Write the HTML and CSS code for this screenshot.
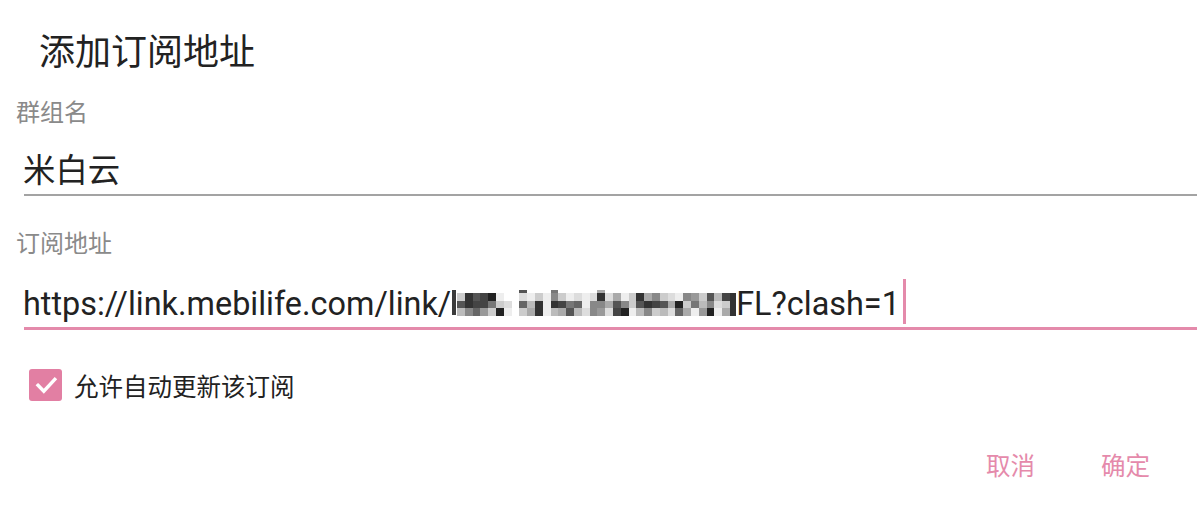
FILE: index.html
```html
<!DOCTYPE html>
<html lang="zh-CN">
<head>
<meta charset="utf-8">
<title>添加订阅地址</title>
<link rel="stylesheet" href="styles.css">
</head>
<body>
<div class="dialog">
  <h1 class="title">添加订阅地址</h1>

  <div class="field">
    <div class="label">群组名</div>
    <div class="value">米白云</div>
    <div class="line"></div>
  </div>

  <div class="field field-url">
    <div class="label">订阅地址</div>
    <div class="value url">https://link.mebilife.com/link/<svg class="mz" width="285" height="28" viewBox="0 0 285 28" shape-rendering="crispEdges"><rect class="stroke" x="1" y="1" fill="#3a3a3a"/><g transform="translate(6,4) scale(7.8,7.7)">
<rect x="0" y="0" fill="#ccc"/><rect x="0" y="1" fill="#555"/><rect x="0" y="2" fill="#bbb"/>
<rect x="1" y="0" fill="#333"/><rect x="1" y="1" fill="#333"/><rect x="1" y="2" fill="#888"/>
<rect x="2" y="0" fill="#555"/><rect x="2" y="1" fill="#444"/><rect x="2" y="2" fill="#666"/>
<rect x="3" y="0" fill="#444"/><rect x="3" y="1" fill="#444"/><rect x="3" y="2" fill="#999"/>
<rect x="4" y="0" fill="#222"/><rect x="4" y="1" fill="#777"/><rect x="4" y="2" fill="#ccc"/>
<rect x="5" y="0" fill="#eee"/><rect x="5" y="1" fill="#ccc"/><rect x="5" y="2" fill="#222"/>
<rect x="6" y="1" fill="#ddd"/><rect x="6" y="2" fill="#eee"/>
<rect class="half" x="8" y="-0.45" fill="#555"/><rect x="8" y="0" fill="#ddd"/><rect x="8" y="1" fill="#666"/><rect x="8" y="2" fill="#ccc"/>
<rect x="9" y="0" fill="#eee"/><rect x="9" y="1" fill="#bbb"/><rect x="9" y="2" fill="#aaa"/>
<rect x="10" y="0" fill="#ccc"/><rect x="10" y="1" fill="#333"/><rect x="10" y="2" fill="#333"/>
<rect x="11" y="0" fill="#eee"/><rect x="11" y="1" fill="#eee"/><rect x="11" y="2" fill="#eee"/>
<rect class="half" x="12" y="-0.45" fill="#777"/><rect x="12" y="0" fill="#888"/><rect x="12" y="1" fill="#333"/><rect x="12" y="2" fill="#bbb"/>
<rect x="13" y="0" fill="#ccc"/><rect x="13" y="1" fill="#444"/><rect x="13" y="2" fill="#aaa"/>
<rect x="14" y="0" fill="#eee"/><rect x="14" y="1" fill="#777"/><rect x="14" y="2" fill="#555"/>
<rect x="15" y="0" fill="#ddd"/><rect x="15" y="1" fill="#666"/><rect x="15" y="2" fill="#bbb"/>
<rect x="16" y="0" fill="#eee"/><rect x="16" y="1" fill="#eee"/><rect x="16" y="2" fill="#ddd"/>
<rect x="17" y="0" fill="#ddd"/><rect x="17" y="1" fill="#888"/><rect x="17" y="2" fill="#888"/>
<rect class="half" x="18" y="-0.45" fill="#aaa"/><rect x="18" y="0" fill="#333"/><rect x="18" y="1" fill="#888"/><rect x="18" y="2" fill="#999"/>
<rect x="19" y="0" fill="#ddd"/><rect x="19" y="1" fill="#aaa"/><rect x="19" y="2" fill="#ddd"/>
<rect x="20" y="0" fill="#aaa"/><rect x="20" y="1" fill="#555"/><rect x="20" y="2" fill="#444"/>
<rect x="21" y="0" fill="#eee"/><rect x="21" y="1" fill="#888"/><rect x="21" y="2" fill="#222"/>
<rect x="22" y="0" fill="#ccc"/><rect x="22" y="1" fill="#ccc"/><rect x="22" y="2" fill="#eee"/>
<rect x="23" y="0" fill="#333"/><rect x="23" y="1" fill="#555"/><rect x="23" y="2" fill="#bbb"/>
<rect x="24" y="0" fill="#aaa"/><rect x="24" y="1" fill="#333"/><rect x="24" y="2" fill="#888"/>
<rect x="25" y="0" fill="#888"/><rect x="25" y="1" fill="#444"/><rect x="25" y="2" fill="#ccc"/>
<rect x="26" y="0" fill="#ccc"/><rect x="26" y="1" fill="#555"/><rect x="26" y="2" fill="#bbb"/>
<rect x="27" y="0" fill="#ddd"/><rect x="27" y="1" fill="#aaa"/><rect x="27" y="2" fill="#ddd"/>
<rect x="28" y="0" fill="#eee"/><rect x="28" y="1" fill="#222"/><rect x="28" y="2" fill="#666"/>
<rect x="29" y="0" fill="#888"/><rect x="29" y="1" fill="#ccc"/><rect x="29" y="2" fill="#aaa"/>
<rect x="30" y="0" fill="#999"/><rect x="30" y="1" fill="#777"/><rect x="30" y="2" fill="#eee"/>
<rect x="31" y="0" fill="#ccc"/><rect x="31" y="1" fill="#bbb"/><rect x="31" y="2" fill="#999"/>
<rect x="32" y="0" fill="#555"/><rect x="32" y="1" fill="#888"/><rect x="32" y="2" fill="#222"/>
<rect x="33" y="0" fill="#bbb"/><rect x="33" y="1" fill="#ddd"/><rect x="33" y="2" fill="#eee"/>
<rect x="34" y="0" fill="#444"/><rect x="34" y="1" fill="#ccc"/><rect x="34" y="2" fill="#aaa"/>
<rect x="35" y="0" fill="#333"/><rect x="35" y="1" fill="#333"/><rect x="35" y="2" fill="#333"/>
</g></svg>FL?clash=1<span class="cursor"></span></div>
    <div class="line line-active"></div>
  </div>

  <label class="check-row">
    <span class="checkbox">
      <svg width="33" height="32" viewBox="0 0 33 32"><path d="M9 16.3 L14.8 22.2 L25.8 10.3" fill="none" stroke="#fff" stroke-width="3.4" stroke-linecap="square"/></svg>
    </span>
    <span class="check-text">允许自动更新该订阅</span>
  </label>

  <div class="actions">
    <span class="btn">取消</span>
    <span class="btn">确定</span>
  </div>
</div>
</body>
</html>
```

FILE: styles.css
```css
html, body {
  margin: 0;
  padding: 0;
  background: #ffffff;
}
body {
  font-family: Roboto, "Noto Sans CJK SC", sans-serif;
  color: #212121;
  width: 1200px;
  height: 510px;
  overflow: hidden;
}
.dialog {
  padding-top: 31px;
}
.title {
  margin: 0;
  padding-left: 39px;
  font-size: 36px;
  font-weight: 400;
  line-height: 45px;
  color: #222222;
}
.field {
  display: flex;
  flex-direction: column;
}
.label {
  margin-top: 22px;
  padding-left: 16px;
  font-size: 24px;
  line-height: 30px;
  color: #8a8a8a;
}
.field-url .label {
  margin-top: 33px;
}
.value {
  margin-top: 20px;
  margin-left: 23px;
  font-size: 32.4px;
  line-height: 46px;
  color: #222222;
  white-space: nowrap;
}
.mz {
  display: inline-block;
  vertical-align: -2px;
}
.mz rect {
  width: 1px;
  height: 1px;
}
.mz rect.stroke {
  width: 4px;
  height: 25px;
}
.mz rect.half {
  height: 0.45px;
}
.cursor {
  display: inline-block;
  width: 3px;
  height: 45px;
  margin-left: 3px;
  vertical-align: -9px;
  background: #e48aab;
}
.line {
  height: 2px;
  margin-left: 24px;
  margin-right: 3px;
  background: #a3a3a3;
}
.line-active {
  height: 3px;
  background: #e48aab;
}
.check-row {
  display: flex;
  align-items: flex-start;
  margin-top: 32px;
  padding-left: 29px;
}
.checkbox {
  margin-top: 7px;
  width: 33px;
  height: 32px;
  border-radius: 3px;
  background: #e27fa3;
  display: flex;
}
.check-text {
  margin-left: 12px;
  font-size: 24.5px;
  line-height: 52px;
  color: #222222;
}
.actions {
  display: flex;
  justify-content: flex-end;
  gap: 66px;
  margin-top: 33px;
  padding-right: 50px;
}
.btn {
  font-size: 24.5px;
  line-height: 40px;
  color: #e58aab;
}
```
